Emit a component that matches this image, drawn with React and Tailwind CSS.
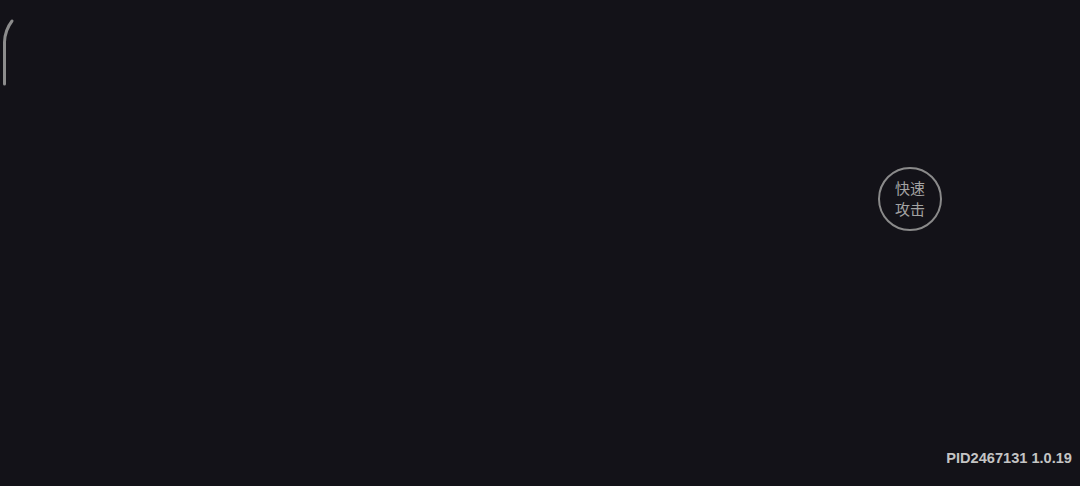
export default function App() {
  return (
    <div
      className="relative w-full h-[486px] bg-[#131218] overflow-hidden flex flex-col"
      style={{ fontFamily: '"Liberation Sans", "Noto Sans CJK SC", sans-serif' }}
    >
      {/* edge arc */}
      <svg className="absolute left-0 top-0" width="20" height="90" viewBox="0 0 20 90">
        <path d="M12 21 Q5 30 4.5 42 L4.5 84" fill="none" stroke="#8c8c8c" strokeWidth="3" strokeLinecap="round" />
      </svg>

      {/* quick attack button */}
      <button className="absolute left-[878px] top-[167px] w-[64px] h-[64px] rounded-full border-2 border-[#8a8a8a] flex flex-col items-center justify-center text-[15px] leading-[21px] text-[#a3a3a3]">
        <span>快速</span>
        <span>攻击</span>
      </button>

      <div className="mt-auto flex justify-end pr-[8px] pb-[16px]">
        <span className="text-[14.6px] font-bold text-[#c4c4c4]">PID2467131 1.0.19</span>
      </div>
    </div>
  );
}
